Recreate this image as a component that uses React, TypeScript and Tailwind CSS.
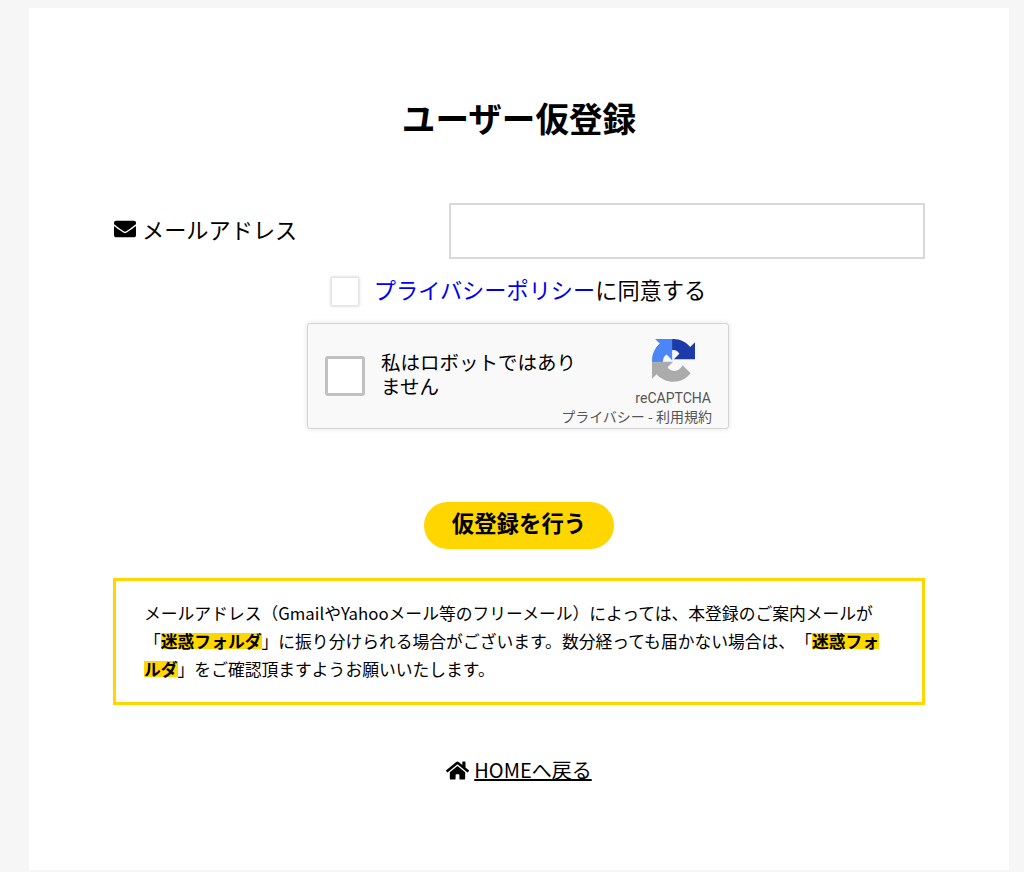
import { FaEnvelope, FaHome } from 'react-icons/fa';

const RecaptchaLogo = () => (
  <svg viewBox="0 0 64 64" className="w-[43px] h-[43px]">
    <path
      d="M64 31.955l-.033-1.37V4.687l-7.16 7.16C50.948 4.674 42.033.093 32.05.093c-10.4 0-19.622 4.96-25.458 12.63l11.736 11.86a15.55 15.55 0 0 1 4.754-5.334c2.05-1.6 4.952-2.906 7.965-2.906.364 0 .645.043.85.123 3.732.295 6.967 2.355 8.87 5.344l-8.307 8.307 32.68-.002"
      fill="#1c3aa9"
    />
    <path
      d="M31.862 0l-1.37.033H4.594l7.16 7.16C4.58 13.05 0 21.967 0 31.95c0 10.4 4.96 19.622 12.63 25.458l11.86-11.736a15.55 15.55 0 0 1-5.334-4.754c-1.6-2.05-2.906-4.952-2.906-7.965 0-.364.043-.645.123-.85.295-3.732 2.355-6.967 5.344-8.87l8.307 8.307-.002-32.68"
      fill="#4a86f5"
    />
    <path
      d="M.001 31.862l.033 1.37v25.9l7.16-7.16c5.86 7.173 14.774 11.754 24.76 11.754 10.4 0 19.622-4.96 25.458-12.63L45.677 39.24a15.55 15.55 0 0 1-4.754 5.334c-2.05 1.6-4.952 2.906-7.965 2.906-.364 0-.645-.043-.85-.123-3.732-.295-6.967-2.355-8.87-5.344l8.307-8.307-32.68.002"
      fill="#ababab"
    />
  </svg>
);

const Recaptcha = () => (
  <div className="w-[422px] h-[106px] flex bg-[#f9f9f9] border border-[#d3d3d3] rounded-[3px] shadow-[0_0_4px_1px_rgba(0,0,0,0.08)]">
    <div className="flex items-center flex-1 min-w-0 pl-[17px]">
      <div className="w-[40px] h-[40px] bg-white border-[3px] border-[#c1c1c1] rounded-[3px] shrink-0" />
      <div className="ml-[16px] mb-[5px] w-[200px] shrink-0 text-[19.5px] leading-[24px] text-black">私はロボットではありません</div>
    </div>
    <div className="w-[170px] shrink-0 flex flex-col items-end pr-[16px] pt-[15px] text-[#555555]">
      <div className="self-end mr-[17px]">
        <RecaptchaLogo />
      </div>
      <div className="mt-[8px] mr-[1px] text-[14px] leading-[17px] font-['Roboto','Liberation_Sans',sans-serif]">reCAPTCHA</div>
      <div className="-mt-[1px] text-[14px] leading-[20px] whitespace-nowrap">プライバシー - 利用規約</div>
    </div>
  </div>
);

const highlight = 'font-bold bg-[linear-gradient(transparent_16%,#ffd600_16%,#ffd600_84%,transparent_84%)]';

export default function App() {
  return (
    <div className="min-h-[872px] bg-[#f6f6f6] pt-[8px] font-['Noto_Sans_CJK_JP','Noto_Sans',sans-serif] text-black [text-spacing-trim:space-all]">
      <div className="ml-[29px] w-[980px] h-[862px] bg-white px-[84px] pt-[86px]">
        <h1 className="text-center text-[33.6px] leading-[48px] font-bold">ユーザー仮登録</h1>

        <div className="mt-[61px] flex items-center justify-between">
          <label className="flex items-center gap-[6px] text-[22.2px] leading-[32px] pb-[4px] pl-[1px]">
            <FaEnvelope className="w-[22px] h-[22px]" />
            メールアドレス
          </label>
          <input type="text" className="w-[476px] h-[56px] border-2 border-[#d9d9d9] bg-white" />
        </div>

        <div className="mt-[16px] h-[32px] flex items-center justify-center gap-[15px] pr-[1px]">
          <span className="w-[28px] h-[29px] bg-white border border-[#e4e4e4] shadow-[0_0_3px_rgba(0,0,0,0.2)]" />
          <span className="text-[22.2px] leading-[30px] pb-[4px]">
            <a className="text-[#0000ee]">プライバシーポリシー</a>に同意する
          </span>
        </div>

        <div className="mt-[16px] flex justify-center pr-[2px]">
          <Recaptcha />
        </div>

        <div className="mt-[73px] flex justify-center">
          <button className="w-[190px] h-[47px] pb-[6px] rounded-full bg-[#ffd600] text-[22.4px] font-bold leading-none">仮登録を行う</button>
        </div>

        <div className="mt-[29px] h-[127px] border-[3px] border-[#ffd600] pl-[28px] pr-[36px] pt-[18px] text-[16.8px] leading-[28px]">
          メールアドレス（GmailやYahooメール等のフリーメール）によっては、本登録のご案内メールが「<strong className={highlight}>迷惑フォルダ</strong>」に振り分けられる場合がございます。数分経っても届かない場合は、「<strong className={highlight}>迷惑フォルダ</strong>」をご確認頂ますようお願いいたします。
        </div>

        <div className="mt-[47px] flex items-center justify-center gap-[5px] text-[20px] leading-[36px]">
          <FaHome className="w-[23px] h-[23px]" />
          <a className="underline">HOMEへ戻る</a>
        </div>
      </div>
    </div>
  );
}
